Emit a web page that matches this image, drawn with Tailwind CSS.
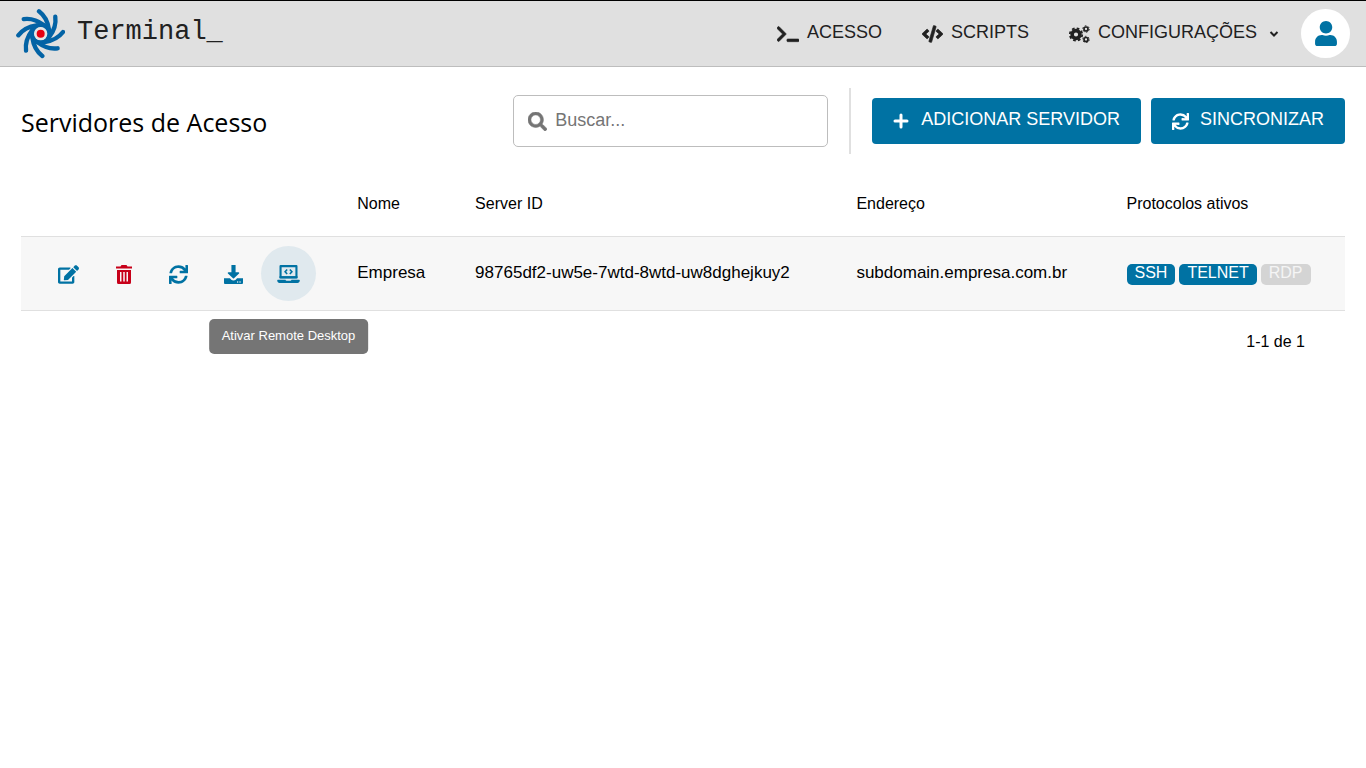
<!DOCTYPE html>
<html lang="pt-BR">
<head>
<meta charset="utf-8">
<meta name="viewport" content="width=device-width, initial-scale=1">
<title>Terminal_ - Servidores de Acesso</title>
<script src="https://cdn.jsdelivr.net/npm/@tailwindcss/browser@4"></script>
</head>
<body class="min-h-screen bg-white font-['Liberation_Sans',Arial,sans-serif] text-black">
<svg class="hidden" aria-hidden="true">
  <symbol id="sync" viewBox="0 0 512 512"><path d="M440.650 12.570l4 82.770A247.160 247.160 0 0 0 255.830 8C134.730 8 33.910 94.920 12.290 209.820A12 12 0 0 0 24.090 224h49.050a12 12 0 0 0 11.670-9.260 175.910 175.910 0 0 1 317-56.940l-101.460-4.860a12 12 0 0 0-12.570 12v47.410a12 12 0 0 0 12 12H500a12 12 0 0 0 12-12V12a12 12 0 0 0-12-12h-47.370a12 12 0 0 0-11.980 12.570zM255.830 432a175.610 175.610 0 0 1-146-77.800l101.800 4.870a12 12 0 0 0 12.570-12v-47.400a12 12 0 0 0-12-12H12a12 12 0 0 0-12 12V500a12 12 0 0 0 12 12h47.350a12 12 0 0 0 12-12.600l-4.150-82.570A247.170 247.170 0 0 0 255.830 504c121.110 0 221.930-86.920 243.550-201.820a12 12 0 0 0-11.800-14.180h-49.050a12 12 0 0 0-11.670 9.260A175.860 175.860 0 0 1 255.830 432z"/></symbol>
</svg>

<header class="flex h-[67px] items-center border-t border-b border-t-black border-b-[#bdbdbd] bg-[#e0e0e0] px-4 text-[#212121]">
  <a href="#" class="flex items-center gap-3">
    <svg class="h-[50px] w-[49px]" viewBox="-74 -74 147 150" fill="none" stroke="#0363a5" stroke-width="13" stroke-linecap="round" aria-hidden="true">
      <defs><path id="arm" d="M-5-67Q20-48 25-12"/></defs>
      <circle r="26" stroke-width="14"/>
      <use href="#arm"/><use href="#arm" transform="rotate(45)"/><use href="#arm" transform="rotate(90)"/><use href="#arm" transform="rotate(135)"/>
      <use href="#arm" transform="rotate(180)"/><use href="#arm" transform="rotate(225)"/><use href="#arm" transform="rotate(270)"/><use href="#arm" transform="rotate(315)"/>
      <circle r="20" fill="#e6e6e6" stroke="none"/><circle r="12" fill="#e60012" stroke="none"/>
    </svg>
    <span class="pb-1 font-['Liberation_Mono',monospace] text-[27px] leading-8">Terminal_</span>
  </a>
  <nav class="ml-auto flex items-center gap-10 pb-1 text-lg leading-6">
    <a href="#" class="flex items-center gap-2">
      <svg class="mt-1 h-[18px] w-[22px]" viewBox="0 0 640 512" fill="currentColor" stroke="currentColor" stroke-width="16" aria-hidden="true"><path d="M257.981 272.971L63.638 467.314c-9.373 9.373-24.569 9.373-33.941 0L7.029 444.647c-9.357-9.357-9.375-24.522-.04-33.901L161.011 256 6.990 101.255c-9.335-9.379-9.317-24.544.04-33.901l22.667-22.667c9.373-9.373 24.569-9.373 33.941 0L257.981 239.030c9.373 9.372 9.373 24.568 0 33.941zM640 456v-32c0-13.255-10.745-24-24-24H312c-13.255 0-24 10.745-24 24v32c0 13.255 10.745 24 24 24h304c13.255 0 24-10.745 24-24z"/></svg>
      ACESSO
    </a>
    <a href="#" class="flex items-center gap-2">
      <svg class="mt-1 h-[18px] w-[21px]" viewBox="0 0 640 512" fill="currentColor" stroke="currentColor" stroke-width="20" aria-hidden="true"><path d="M278.900 511.500l-61-17.700c-6.400-1.800-10-8.500-8.200-14.900L346.200 8.700c1.800-6.400 8.500-10 14.900-8.200l61 17.700c6.400 1.800 10 8.500 8.200 14.900L293.800 503.300c-1.900 6.400-8.500 10.100-14.900 8.200zm-114-112.200l43.500-46.400c4.600-4.900 4.300-12.700-.8-17.200L117 256l90.600-79.700c5.100-4.500 5.500-12.300.8-17.200l-43.500-46.400c-4.500-4.800-12.100-5.100-17-.5L3.800 247.200c-5.100 4.700-5.100 12.800 0 17.500l144.100 135.100c4.900 4.600 12.500 4.400 17-.5zm327.200.6l144.100-135.100c5.100-4.700 5.100-12.800 0-17.500L492.100 112.100c-4.800-4.500-12.400-4.300-17 .5L431.600 159c-4.600 4.900-4.300 12.700.8 17.200L523 256l-90.600 79.700c-5.100 4.500-5.500 12.300-.8 17.200l43.500 46.400c4.500 4.900 12.100 5.100 17 .6z"/></svg>
      SCRIPTS
    </a>
    <a href="#" class="flex items-center gap-2">
      <svg class="mt-1 h-[18px] w-[21px]" viewBox="0 0 21 18" aria-hidden="true">
        <g fill="none" stroke="currentColor">
          <circle cx="7" cy="9.500" r="3.900" stroke-width="3.600"/>
          <circle cx="7" cy="9.500" r="6.200" stroke-width="1.800" stroke-dasharray="2.700 2.170"/>
          <circle cx="17" cy="4" r="2" stroke-width="1.700"/>
          <circle cx="17" cy="4" r="3.200" stroke-width="1" stroke-dasharray="1.700 1.650"/>
          <circle cx="17" cy="14.500" r="2" stroke-width="1.700"/>
          <circle cx="17" cy="14.500" r="3.200" stroke-width="1" stroke-dasharray="1.700 1.650"/>
        </g>
      </svg>
      CONFIGURAÇÕES
      <svg class="mt-1 ml-1 h-[10px] w-[10px]" viewBox="0 0 10 10" fill="none" stroke="currentColor" stroke-width="2" aria-hidden="true"><path d="M1.500 3l3.500 3.500L8.500 3"/></svg>
    </a>
  </nav>
  <button type="button" aria-label="Perfil" class="ml-[22px] flex size-[49px] items-center justify-center rounded-full bg-white text-[#0072a3]">
    <svg class="h-[25px] w-[22px]" viewBox="0 0 448 512" fill="currentColor" aria-hidden="true"><path d="M224 256c70.700 0 128-57.300 128-128S294.700 0 224 0 96 57.300 96 128s57.300 128 128 128zm89.600 32h-16.700c-22.200 10.200-46.900 16-72.900 16s-50.600-5.800-72.900-16h-16.700C60.200 288 0 348.200 0 422.400V464c0 26.500 21.500 48 48 48h352c26.500 0 48-21.500 48-48v-41.600c0-74.200-60.200-134.400-134.400-134.400z"/></svg>
  </button>
</header>

<main class="px-[21px] pt-[21px]">
  <div class="flex items-center">
    <h1 class="pt-0.5 font-['Open_Sans',sans-serif] text-[25px] leading-8">Servidores de Acesso</h1>
    <label class="ml-auto flex h-[52px] w-[315px] items-center gap-2 rounded-[5px] border border-[#bdbdbd] px-[14px]">
      <svg class="size-[19px] shrink-0 text-[#757575]" viewBox="0 0 512 512" fill="currentColor" stroke="currentColor" stroke-width="14" aria-hidden="true"><path d="M505 442.700L405.300 343c-4.500-4.500-10.600-7-17-7H372c27.600-35.300 44-79.700 44-128C416 93.100 322.900 0 208 0S0 93.100 0 208s93.100 208 208 208c48.300 0 92.700-16.400 128-44v16.300c0 6.400 2.500 12.500 7 17l99.700 99.700c9.400 9.400 24.600 9.400 33.900 0l28.300-28.300c9.400-9.400 9.400-24.600.1-34zM208 336c-70.700 0-128-57.200-128-128 0-70.700 57.200-128 128-128 70.700 0 128 57.200 128 128 0 70.700-57.200 128-128 128z"/></svg>
      <input type="text" aria-label="Buscar" placeholder="Buscar..." class="min-w-0 flex-1 pb-0.5 text-lg leading-6 outline-none placeholder:text-[#757575]">
    </label>
    <div class="mx-[21px] h-[66px] w-0.5 bg-[#e0e0e0]"></div>
    <div class="flex gap-[10px] text-lg leading-6 text-white">
      <button type="button" class="flex h-[46px] items-center gap-3 rounded bg-[#0072a3] px-[21px] pb-1">
        <svg class="mt-1 size-4" viewBox="0 0 16 16" fill="none" stroke="currentColor" stroke-width="3" stroke-linecap="round" aria-hidden="true"><path d="M8 2v12M2 8h12"/></svg>
        ADICIONAR SERVIDOR
      </button>
      <button type="button" class="flex h-[46px] items-center gap-[11px] rounded bg-[#0072a3] px-[21px] pb-1">
        <svg class="mt-1 size-[17px]" fill="currentColor" aria-hidden="true"><use href="#sync"/></svg>
        SINCRONIZAR
      </button>
    </div>
  </div>

  <table class="mt-4 w-full table-fixed border-collapse text-left text-[17px]">
    <colgroup><col class="w-[25.4%]"><col class="w-[8.9%]"><col class="w-[28.8%]"><col class="w-[20.4%]"><col></colgroup>
    <thead>
      <tr class="h-[66px] text-base [&>th]:font-normal">
        <td class="p-0"></td>
        <th scope="col" class="p-0 pt-0.5">Nome</th><th scope="col" class="p-0 pt-0.5">Server ID</th><th scope="col" class="p-0 pt-0.5">Endereço</th><th scope="col" class="p-0 pt-0.5">Protocolos ativos</th>
      </tr>
    </thead>
    <tbody>
      <tr class="h-[74px] border-y border-[#e0e0e0] bg-[#f7f7f7]">
        <td class="p-0">
          <div class="flex pl-5 text-[#0072a3]">
            <button type="button" aria-label="Editar" class="flex size-[55px] items-center justify-center rounded-full pt-0.5">
              <svg class="h-[19px] w-[21px]" viewBox="0 0 576 512" fill="currentColor" aria-hidden="true"><path d="M402.600 83.200l90.200 90.200c3.800 3.800 3.800 10 0 13.800L274.400 405.600l-92.800 10.300c-12.400 1.400-22.900-9.100-21.500-21.500l10.300-92.800L388.800 83.200c3.800-3.800 10-3.800 13.800 0zm162-22.900l-48.800-48.800c-15.200-15.200-39.900-15.200-55.200 0l-35.400 35.400c-3.800 3.800-3.800 10 0 13.800l90.200 90.200c3.800 3.800 10 3.800 13.800 0l35.400-35.400c15.200-15.300 15.200-40 0-55.200zM384 346.200V448H64V128h229.800c3.200 0 6.200-1.300 8.500-3.500l40-40c7.600-7.600 2.200-20.500-8.500-20.500H48C21.500 64 0 85.500 0 112v352c0 26.500 21.500 48 48 48h352c26.500 0 48-21.500 48-48V306.200c0-10.700-12.900-16-20.500-8.500l-40 40c-2.200 2.300-3.500 5.300-3.500 8.500z"/></svg>
            </button>
            <button type="button" aria-label="Excluir" class="flex size-[55px] items-center justify-center rounded-full pt-0.5 text-[#c70019]">
              <svg class="h-[19px] w-4" viewBox="0 0 16 19" aria-hidden="true"><path fill="currentColor" fill-rule="evenodd" d="M0 1.500h4.500L5.500 0h5l1 1.500H16V3.500H0zM1 5h14v12.500q0 1.500-1.500 1.500h-11Q1 19 1 17.500zM4 7v9.500h1.500V7zM7.250 7v9.500h1.500V7zM10.500 7v9.500H12V7z"/></svg>
            </button>
            <button type="button" aria-label="Sincronizar" class="flex size-[55px] items-center justify-center rounded-full pt-0.5">
              <svg class="size-[19px]" fill="currentColor" aria-hidden="true"><use href="#sync"/></svg>
            </button>
            <button type="button" aria-label="Baixar" class="flex size-[55px] items-center justify-center rounded-full pt-0.5">
              <svg class="size-[19px]" viewBox="0 0 512 512" fill="currentColor" aria-hidden="true"><path d="M200 0h112v192h79.700c17.800 0 26.700 21.500 14.100 34.100L269.700 360c-7.500 7.500-19.800 7.500-27.300 0L106 226.100c-12.600-12.600-3.700-34.100 14.100-34.100H200zm312 360v128c0 13.300-10.700 24-24 24H24c-13.300 0-24-10.700-24-24V360h160l36 38c30 30 90 30 120 0l36-38zM388 456c0-11-9-20-20-20s-20 9-20 20 9 20 20 20 20-9 20-20zm64 0c0-11-9-20-20-20s-20 9-20 20 9 20 20 20 20-9 20-20z"/></svg>
            </button>
            <div class="relative">
              <button type="button" aria-label="Ativar Remote Desktop" aria-describedby="tip" class="flex size-[55px] items-center justify-center rounded-full bg-[#e0e9ee] pt-0.5">
                <svg class="h-[18px] w-[23px]" viewBox="0 0 640 512" aria-hidden="true"><path fill="none" stroke="currentColor" stroke-width="60" stroke-linejoin="round" d="M94 352V32h452v320z"/><path fill="none" stroke="currentColor" stroke-width="46" d="M282 130l-58 62 58 62M358 130l58 62-58 62"/><path fill="currentColor" d="M64 320h512v60H64zM16 416h220c4 20 18 32 38 32h92c20 0 34-12 38-32h220c9 0 16 7 16 16v16c0 35-29 64-64 64H64c-35 0-64-29-64-64v-16c0-9 7-16 16-16z"/></svg>
              </button>
              <div id="tip" role="tooltip" class="absolute top-[73px] left-1/2 flex h-[35px] -translate-x-1/2 items-center rounded-[5px] bg-[#757575] px-[13px] text-[13px] whitespace-nowrap text-white">Ativar Remote Desktop</div>
            </div>
          </div>
        </td>
        <td class="p-0">Empresa</td>
        <td class="p-0">98765df2-uw5e-7wtd-8wtd-uw8dghejkuy2</td>
        <td class="p-0">subdomain.empresa.com.br</td>
        <td class="p-0 pt-0.5">
          <div class="flex gap-1 text-base leading-[18px] text-white">
            <span class="rounded-[5px] bg-[#0072a3] px-2 pb-[3px]">SSH</span>
            <span class="rounded-[5px] bg-[#0072a3] px-2 pb-[3px]">TELNET</span>
            <span class="rounded-[5px] bg-[#d4d4d4] px-2 pb-[3px] text-[#f5f5f5]">RDP</span>
          </div>
        </td>
      </tr>
    </tbody>
  </table>
  <p class="mt-[19px] pr-10 text-right text-base leading-6">1-1 de 1</p>
</main>
</body>
</html>
